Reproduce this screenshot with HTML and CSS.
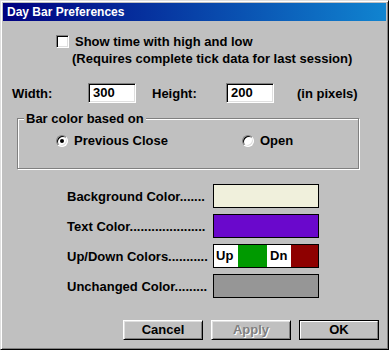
FILE: index.html
```html
<!DOCTYPE html>
<html>
<head>
<meta charset="utf-8">
<link rel="stylesheet" href="styles.css">
</head>
<body>
<div class="window">
  <div class="titlebar">Day Bar Preferences</div>
  <div class="content">
    <div class="check-row"><span class="checkbox"></span><span>Show time with high and low</span></div>
    <div class="note">(Requires complete tick data for last session)</div>
    <div class="size-row">
      <span class="lbl-width">Width:</span>
      <span class="input">300</span>
      <span class="lbl-height">Height:</span>
      <span class="input">200</span>
      <span class="units">(in pixels)</span>
    </div>
    <div class="group">
      <span class="legend">Bar color based on</span>
      <div class="radios">
        <div class="radio radio-first"><span class="dot checked"></span><span>Previous Close</span></div>
        <div class="radio"><span class="dot"></span><span>Open</span></div>
      </div>
    </div>
    <div class="colors">
      <div class="color-row"><span class="clabel">Background Color.......</span><span class="swatch bg"></span></div>
      <div class="color-row"><span class="clabel">Text Color.....................</span><span class="swatch text"></span></div>
      <div class="color-row"><span class="clabel">Up/Down Colors...........</span><span class="swatch updown"><span class="seg up">Up</span><span class="seg green"></span><span class="seg dn">Dn</span><span class="seg red"></span></span></div>
      <div class="color-row"><span class="clabel">Unchanged Color.........</span><span class="swatch unchanged"></span></div>
    </div>
    <div class="buttons">
      <span class="btn">Cancel</span>
      <span class="btn disabled">Apply</span>
      <span class="btn default"><span class="btn-inner">OK</span></span>
    </div>
  </div>
</div>
</body>
</html>
```
FILE: styles.css
```css
html, body {
  margin: 0;
  padding: 0;
  background: #c0c0c0;
}
body {
  font: bold 13px/15px "Liberation Sans", Arial, sans-serif;
  color: #000;
}
.window {
  box-sizing: border-box;
  width: 389px;
  height: 350px;
  background: #c0c0c0;
  border: 1px solid;
  border-color: #dfdfdf #000 #000 #dfdfdf;
  box-shadow: inset 1px 1px #fff, inset -1px -1px #808080;
  padding: 2px;
  display: flex;
  flex-direction: column;
}
.titlebar {
  height: 18px;
  line-height: 18px;
  font-size: 12px;
  color: #fff;
  padding-left: 4px;
  background: linear-gradient(to right, #000080, #1084d0);
}
.content {
  flex: 1;
  display: flex;
  flex-direction: column;
}
.check-row {
  margin-top: 13px;
  padding-left: 53px;
  display: flex;
  align-items: center;
  height: 15px;
}
.checkbox {
  box-sizing: border-box;
  width: 13px;
  height: 13px;
  background: #fff;
  border: 1px solid;
  border-color: #808080 #fff #fff #808080;
  box-shadow: inset 1px 1px #000, inset -1px -1px #dfdfdf;
  margin-right: 6px;
}
.note {
  margin-top: 2px;
  padding-left: 69px;
}
.size-row {
  margin-top: 17px;
  padding-left: 9px;
  display: flex;
  align-items: center;
  height: 20px;
}
.lbl-width { width: 76px; }
.lbl-height { margin-left: 16px; width: 74px; }
.units { margin-left: 23px; }
.input {
  box-sizing: border-box;
  width: 48px;
  height: 20px;
  background: #fff;
  border: 1px solid;
  border-color: #808080 #fff #fff #808080;
  box-shadow: inset 1px 1px #000, inset -1px -1px #dfdfdf;
  padding-left: 4px;
  line-height: 18px;
}
.group {
  box-sizing: border-box;
  margin-top: 15px;
  margin-left: 14px;
  width: 342px;
  height: 51px;
  border: 1px solid #808080;
  box-shadow: inset 1px 1px #fff, 1px 1px #fff;
  display: flex;
  flex-direction: column;
  align-items: flex-start;
}
.legend {
  margin-top: -8px;
  margin-left: 6px;
  padding: 0 2px;
  background: #c0c0c0;
}
.radios {
  margin-top: 7px;
  display: flex;
  padding-left: 38px;
}
.radio {
  display: flex;
  align-items: center;
}
.radio-first { width: 186px; }
.dot {
  box-sizing: border-box;
  width: 12px;
  height: 12px;
  border-radius: 50%;
  background: #fff;
  border: 1px solid;
  border-color: #808080 #fff #fff #808080;
  box-shadow: inset 1px 1px #000, inset -1px -1px #dfdfdf;
  margin-right: 6px;
  display: flex;
  align-items: center;
  justify-content: center;
}
.dot.checked::after {
  content: "";
  width: 4px;
  height: 4px;
  border-radius: 50%;
  background: #000;
}
.colors {
  margin-top: 15px;
  padding-left: 64px;
  display: flex;
  flex-direction: column;
  gap: 6px;
}
.color-row {
  display: flex;
  align-items: center;
  height: 24px;
}
.clabel {
  width: 146px;
  white-space: nowrap;
}
.swatch {
  box-sizing: border-box;
  width: 106px;
  height: 24px;
  border: 1px solid #000;
  display: flex;
}
.swatch.bg { background: #f0f0dc; }
.swatch.text { background: #6a08cc; }
.swatch.unchanged { background: #969696; }
.seg {
  height: 22px;
  line-height: 22px;
}
.seg.up { width: 24px; background: #fff; padding-left: 2px; box-sizing: border-box; }
.seg.green { width: 29px; background: #009a00; }
.seg.dn { width: 24px; background: #fff; padding-left: 3px; box-sizing: border-box; }
.seg.red { width: 27px; background: #8e0000; }
.buttons {
  margin-top: 22px;
  display: flex;
  justify-content: flex-end;
  gap: 8px;
  padding-right: 7px;
}
.btn {
  box-sizing: border-box;
  width: 80px;
  height: 20px;
  border: 1px solid;
  border-color: #fff #000 #000 #fff;
  box-shadow: inset 1px 1px #dfdfdf, inset -1px -1px #808080;
  text-align: center;
  line-height: 18px;
}
.btn.disabled {
  color: #808080;
  text-shadow: 1px 1px #fff;
}
.btn.default {
  border: 1px solid #000;
  box-shadow: none;
  display: flex;
}
.btn-inner {
  flex: 1;
  border: 1px solid;
  border-color: #fff #808080 #808080 #fff;
  line-height: 16px;
}
```
